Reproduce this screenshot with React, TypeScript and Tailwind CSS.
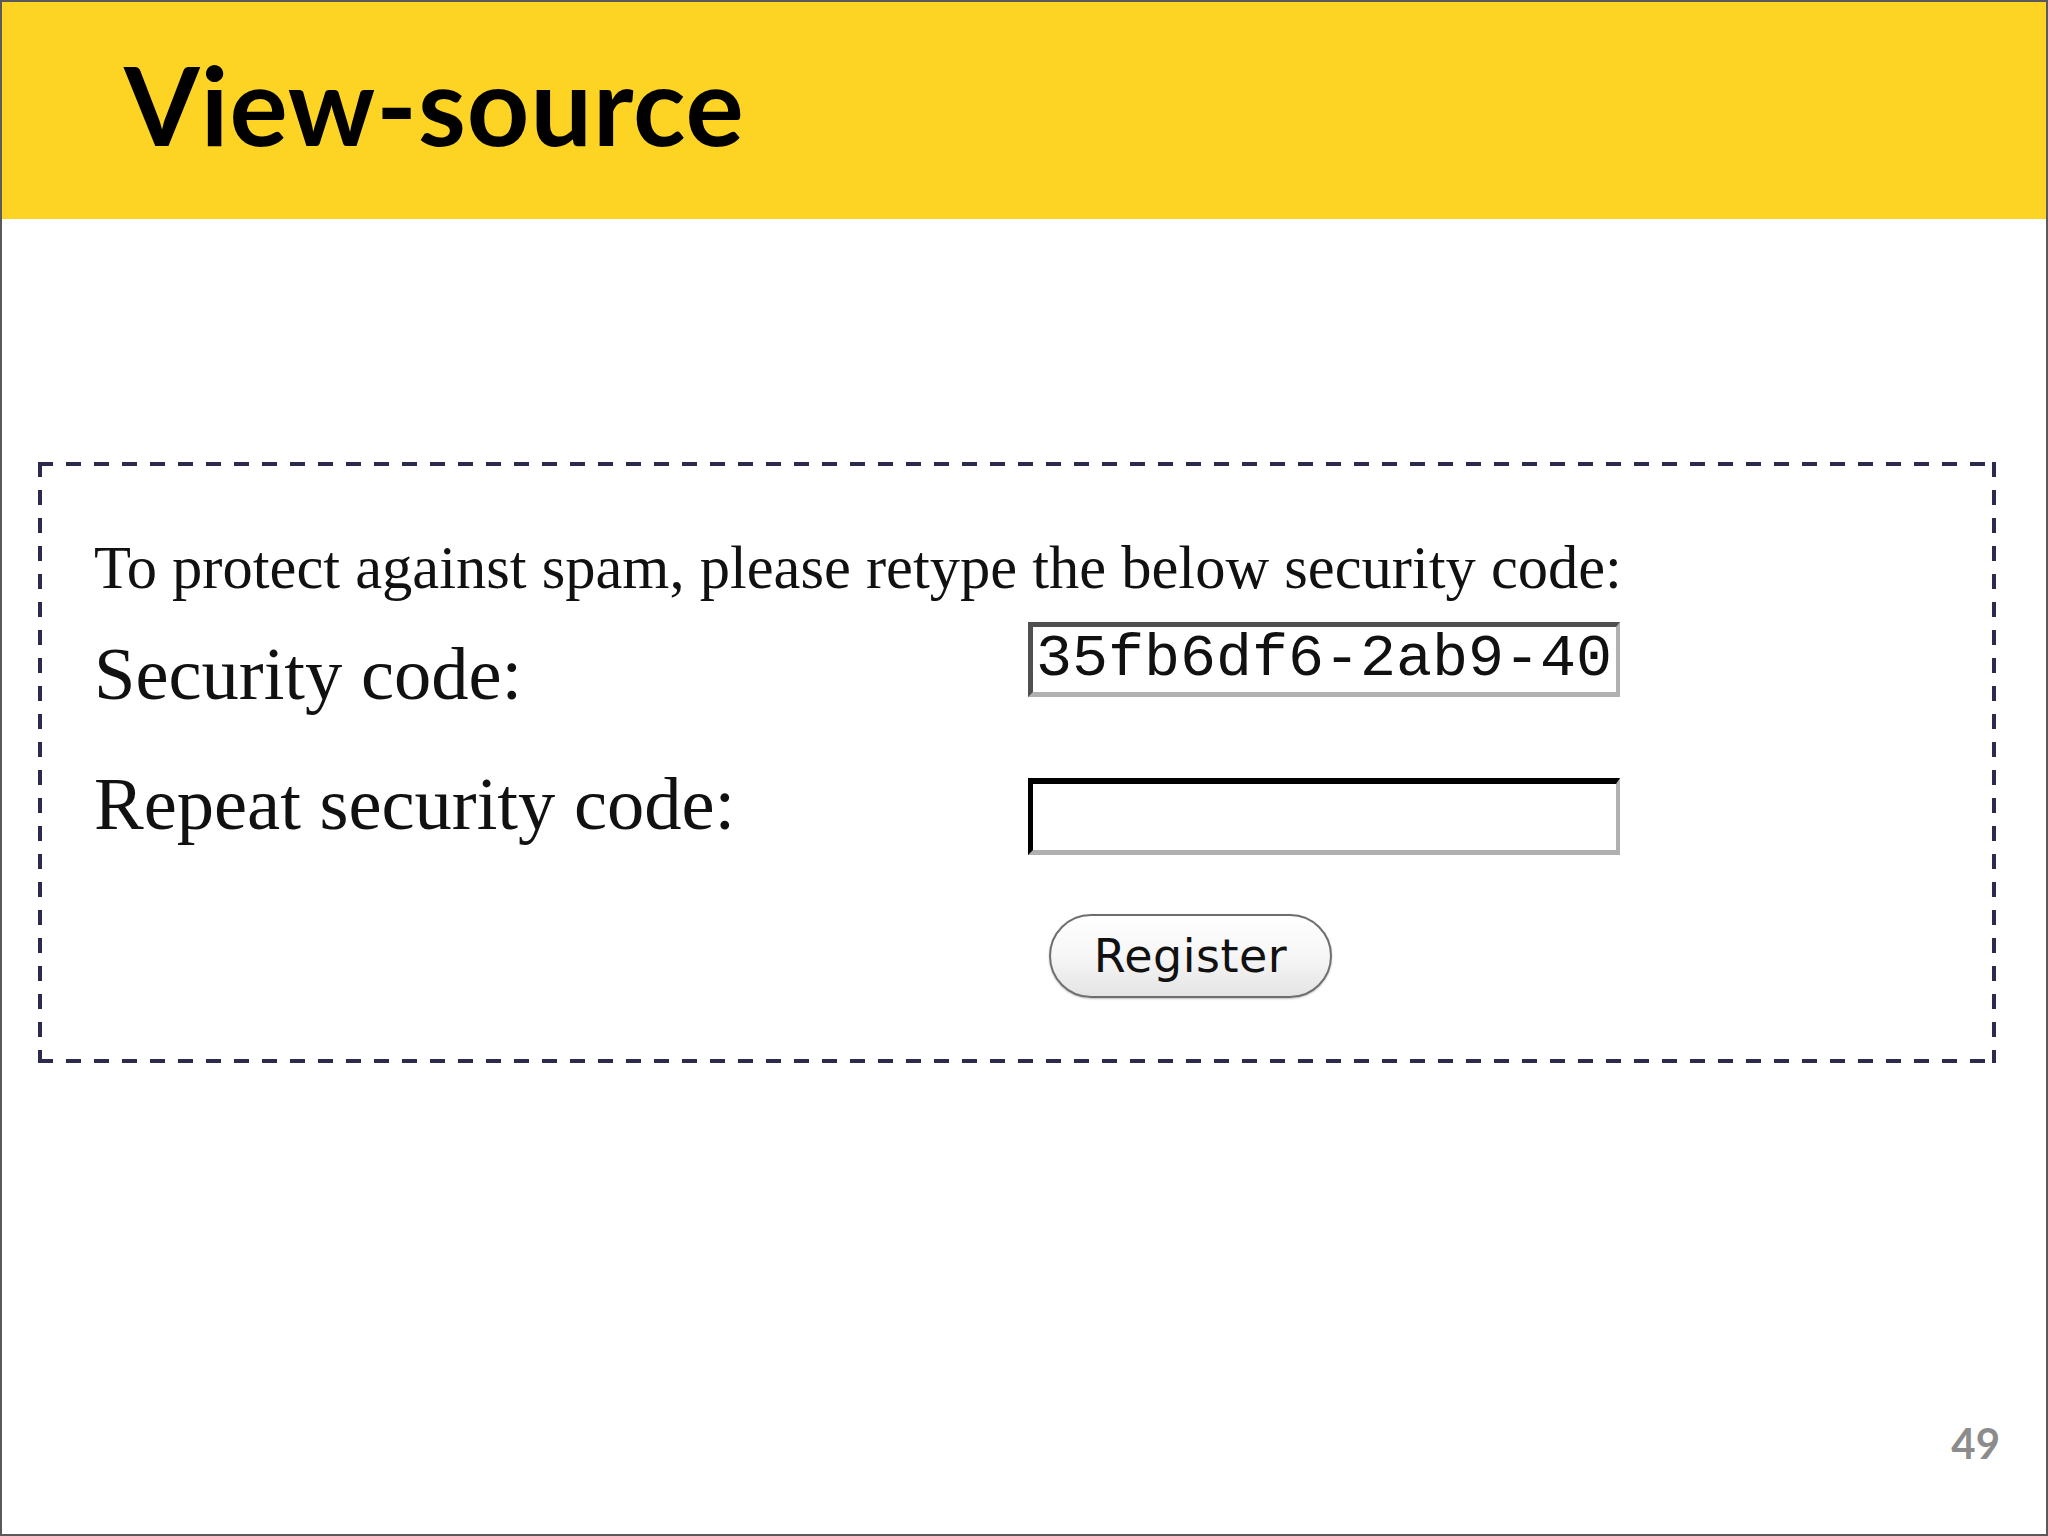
export default function App() {
  return (
    <div className="w-[2048px] h-[1536px] border-2 border-[#5a5a5a] bg-white flex flex-col overflow-hidden">
      {/* Slide header */}
      <div className="h-[217px] bg-[#fdd424] pl-[122px] pt-[47px] shrink-0">
        <h1 className="font-['Lato',sans-serif] font-bold text-[109px] leading-none text-black tracking-[1px]">
          View-source
        </h1>
      </div>

      {/* Screenshot of the form, dashed frame drawn with gradients to get long dashes */}
      <div className="ml-[36px] mt-[243px] w-[1958px] pl-[56px] pt-[73px] pb-[65px] font-['Liberation_Serif',serif] text-[#111] bg-no-repeat [background-image:repeating-linear-gradient(90deg,#2c2b4e_0_15px,transparent_15px_28px),repeating-linear-gradient(90deg,#2c2b4e_0_15px,transparent_15px_28px),repeating-linear-gradient(180deg,#2c2b4e_0_15px,transparent_15px_28px),repeating-linear-gradient(180deg,#2c2b4e_0_15px,transparent_15px_28px)] [background-size:100%_4px,100%_4px,4px_100%,4px_100%] [background-position:0_0,0_100%,0_0,100%_0]">
        <p className="text-[60.5px] leading-[66px] whitespace-nowrap">
          To protect against spam, please retype the below security code:
        </p>

        <div className="flex items-start mt-[21px]">
          <span className="w-[934px] mt-[11px] text-[74.5px] leading-[82px]">Security code:</span>
          <div className="w-[592px] h-[75px] border-t-[5px] border-l-[5px] border-b-[5px] border-r-[4px] border-t-[#505050] border-l-[#505050] border-b-[#b0b0b0] border-r-[#b0b0b0] pl-[3px] font-['Courier_New','Nimbus_Mono_PS','FreeMono','Liberation_Mono',monospace] text-[60px] leading-[65px] text-[#111] overflow-hidden whitespace-nowrap">
            35fb6df6-2ab9-40
          </div>
        </div>

        <div className="flex items-start mt-[48px]">
          <span className="w-[934px] text-[74.5px] leading-[82px]">Repeat security code:</span>
          <div className="mt-[15px] w-[592px] h-[77px] border-t-[6px] border-l-[5px] border-b-[5px] border-r-[4px] border-t-black border-l-black border-b-[#b0b0b0] border-r-[#b0b0b0] bg-white" />
        </div>

        <div className="flex mt-[59px] pl-[955px]">
          <button className="w-[283px] h-[84px] rounded-full border-2 border-[#6e6e6e] bg-gradient-to-b from-white via-[#f6f6f6] to-[#e4e4e4] shadow-[0_1px_2px_rgba(0,0,0,0.25)] font-['DejaVu_Sans',sans-serif] text-[46px] leading-none text-[#111] tracking-[0.5px]">
            Register
          </button>
        </div>
      </div>

      {/* Page number */}
      <div className="mt-auto self-end pr-[46px] pb-[70px] font-['Lato',sans-serif] font-bold text-[42px] leading-none text-[#8c8c8c]">
        49
      </div>
    </div>
  );
}
